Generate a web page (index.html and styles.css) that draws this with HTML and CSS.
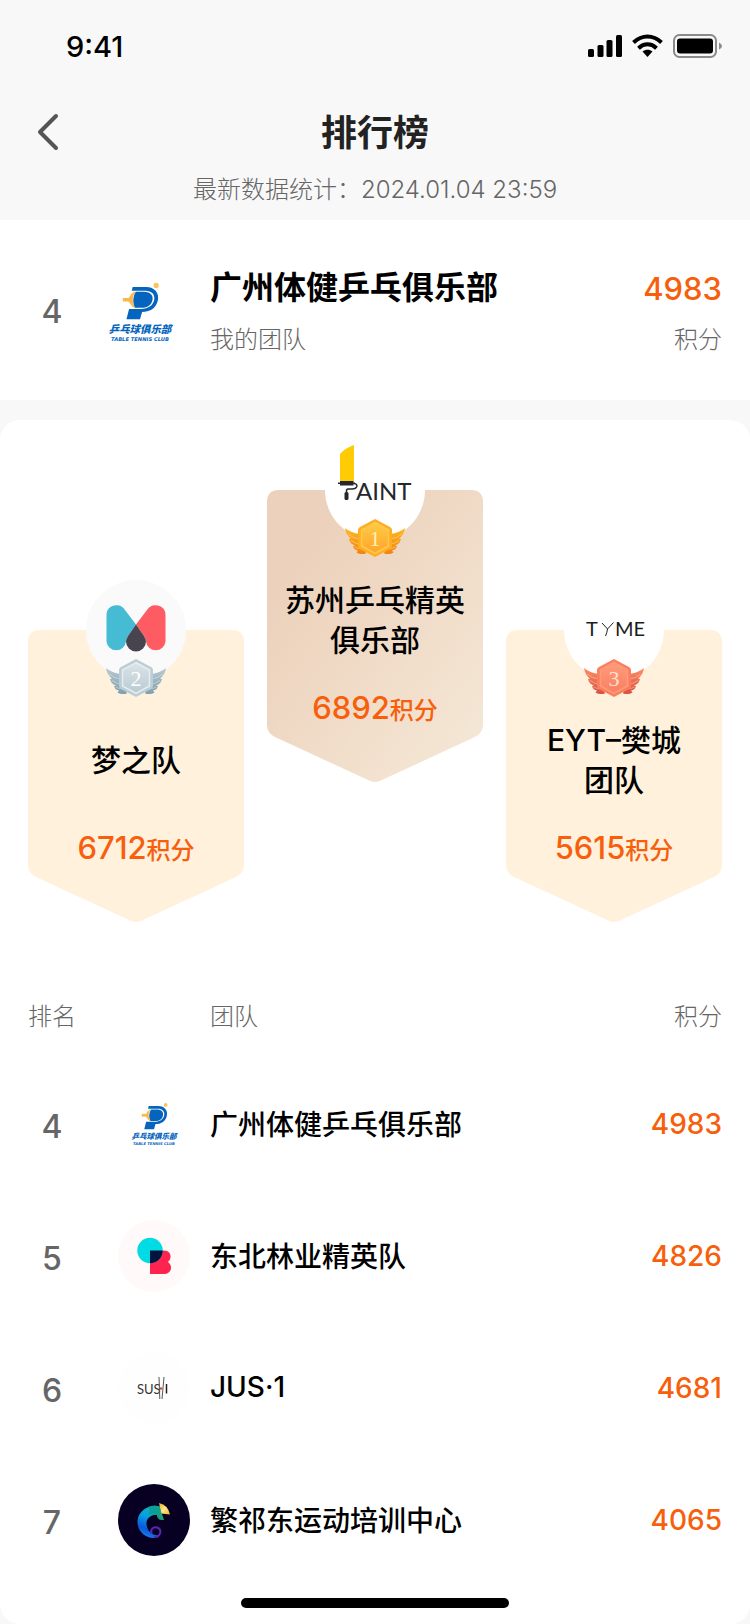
FILE: index.html
```html
<!DOCTYPE html>
<html lang="zh-CN">
<head>
<meta charset="utf-8">
<meta name="viewport" content="width=device-width, initial-scale=1">
<title>排行榜</title>
<link rel="stylesheet" href="styles.css">
</head>
<body>
<svg class="defs" aria-hidden="true">
  <defs>
    <linearGradient id="gold" x1="0" y1="0" x2="0" y2="1"><stop offset="0" stop-color="#ffcb45"/><stop offset="1" stop-color="#ffa42c"/></linearGradient>
    <linearGradient id="goldWing" x1="0" y1="0" x2="0" y2="1"><stop offset="0" stop-color="#ffb81f"/><stop offset="1" stop-color="#f08410"/></linearGradient>
    <linearGradient id="silver" x1="0" y1="0" x2="0" y2="1"><stop offset="0" stop-color="#dbe4e9"/><stop offset="1" stop-color="#b9cad2"/></linearGradient>
    <linearGradient id="silverWing" x1="0" y1="0" x2="0" y2="1"><stop offset="0" stop-color="#b9c9d1"/><stop offset="1" stop-color="#7f9fae"/></linearGradient>
    <linearGradient id="bronze" x1="0" y1="0" x2="0" y2="1"><stop offset="0" stop-color="#ff9c7a"/><stop offset="1" stop-color="#f87f62"/></linearGradient>
    <linearGradient id="bronzeWing" x1="0" y1="0" x2="0" y2="1"><stop offset="0" stop-color="#ff8d5f"/><stop offset="1" stop-color="#d95145"/></linearGradient>
    <linearGradient id="champion" x1="0" y1="0" x2="1" y2="1"><stop offset="0.2" stop-color="#ecd2bc"/><stop offset="0.36" stop-color="#eed6c1"/><stop offset="1" stop-color="#f5e9d8"/></linearGradient>
    <linearGradient id="tail" x1="0.7" y1="0" x2="0.4" y2="1"><stop offset="0" stop-color="#12b5b5"/><stop offset="0.4" stop-color="#079fe3"/><stop offset="0.75" stop-color="#0a57dc"/><stop offset="1" stop-color="#1683e8"/></linearGradient>
    <linearGradient id="beak" x1="0" y1="0" x2="1" y2="1"><stop offset="0" stop-color="#f5a51c"/><stop offset="0.5" stop-color="#fce88a"/><stop offset="1" stop-color="#f7b126"/></linearGradient>
    <symbol id="shield" viewBox="0 0 216 292" preserveAspectRatio="none">
      <path d="M12 0H204Q216 0 216 12V235Q216 243 208 247L115 290Q108 294 101 290L8 247Q0 243 0 235V12Q0 0 12 0Z"/>
    </symbol>
    <symbol id="wings" viewBox="0 0 60 38">
      <path d="M0 9Q6 14 15 15L21 34.500Q15 36 11.500 33.500L13 31.500Q9 31 8 27L10 26.500Q5 25 4 20L6 19.500Q1 16 0 9Z"/>
      <path d="M60 9Q54 14 45 15L39 34.500Q45 36 48.500 33.500L47 31.500Q51 31 52 27L50 26.500Q55 25 56 20L54 19.500Q59 16 60 9Z"/>
      <path d="M3 15Q8 19.500 15 20M6 21.500Q11 25 16 25.500M9.500 28Q13 30 18 30M57 15Q52 19.500 45 20M54 21.500Q49 25 44 25.500M50.500 28Q47 30 42 30" fill="none" stroke="#fff" stroke-opacity=".35"/>
    </symbol>
    <symbol id="club" viewBox="2 2 96 96">
      <circle cx="65.500" cy="24.500" r="2.500" fill="#fbc25e"/>
      <path d="M43 26H56C64 26 69 32 67 39.500C65 47 59 50 52 50L50 57H37L39.500 47H51C58 47 62 44 63.500 39C65 33 61 29.500 55 29.500H42Z" fill="#0565be"/>
      <path d="M46 30.500H54C60 30.500 63 34 62 38.500C61 43.500 57 46 52 46H45C43 41 43 35 46 30.500Z" fill="#0565be"/>
      <path d="M45 30.500C40 34 41 36.500 39 37H34V39.500H38.500C41 40 41.500 44 44.500 45.500C41.500 40 42 35 45 30.500Z" fill="#fbb84a" stroke="#fbb84a"/>
      <text x="50" y="70.500" class="club-cn">乒乓球俱乐部</text>
      <text x="50" y="78" class="club-en">TABLE TENNIS CLUB</text>
    </symbol>
  </defs>
</svg>

<div class="screen">
  <header class="top">
    <div class="status">
      <span class="clock">9:41</span>
      <svg class="status-icons" viewBox="0 0 136 28" aria-hidden="true">
        <rect x="0" y="17" width="6" height="8" rx="1.500"/><rect x="9.500" y="13" width="6" height="12" rx="1.500"/><rect x="18.500" y="8" width="6" height="17" rx="1.500"/><rect x="28" y="3" width="6" height="22" rx="1.500"/>
        <g fill="none" stroke="#000" stroke-width="4"><path d="M45.500 10.500C54 2.500 65 2.500 73.500 10.500"/><path d="M50.500 16.200C56 11 63 11 68.500 16.200"/></g>
        <path d="M54.500 19.500C57.500 17.200 61.500 17.200 64.500 19.500L59.500 25Z"/>
        <rect x="86" y="3" width="42" height="22" rx="5.500" fill="none" stroke="#8a8a8a" stroke-width="2"/>
        <rect x="89" y="6.500" width="36" height="15" rx="3"/>
        <path d="M131 10.500Q134 12 134 14T131 17.500Z" fill="#8a8a8a"/>
      </svg>
    </div>
    <div class="nav">
      <button class="back" type="button" aria-label="返回">
        <svg viewBox="0 0 24 40" aria-hidden="true"><path d="M20 4L4 20L20 36" fill="none" stroke="#555" stroke-width="4" stroke-linecap="round" stroke-linejoin="round"/></svg>
      </button>
      <h1 class="title">排行榜</h1>
    </div>
    <p class="updated">最新数据统计：2024.01.04 23:59</p>
  </header>

  <section class="mine">
    <span class="rank">4</span>
    <svg class="mine-logo" aria-hidden="true"><use href="#club"/></svg>
    <div class="mine-info">
      <h2 class="mine-name">广州体健乒乓俱乐部</h2>
      <p class="note">我的团队</p>
    </div>
    <div class="mine-score">
      <p class="mine-points">4983</p>
      <p class="note">积分</p>
    </div>
  </section>

  <main class="board">
    <section class="podium">
      <article class="place side">
        <svg class="plate" fill="#fff1dc" aria-hidden="true"><use href="#shield"/></svg>
        <svg class="avatar" viewBox="0 0 100 100" aria-hidden="true">
          <circle cx="50" cy="50" r="50" fill="#fafafa"/>
          <path d="M20.500 35A10 10 0 0 1 39 30L50 44.500L42 56Q39.500 60 40 61.500A9.800 9.800 0 0 1 20.500 61.500Z" fill="#45bbd4"/>
          <path d="M79.500 35A10 10 0 0 0 61 30L50 44.500L58 56Q60.500 60 60 61.500A9.800 9.800 0 0 0 79.500 61.500Z" fill="#ff5b62"/>
          <path d="M50 44.500L58 56Q60 59 60 61.500A10 10 0 0 1 40 61.500Q40 59 42 56Z" fill="#474450"/>
        </svg>
        <svg class="medal" viewBox="0 0 60 38" aria-hidden="true">
          <use href="#wings" fill="url(#silverWing)"/>
          <path d="M30 0L45 8Q47 9 47 11V27Q47 29 45 30L30 38L15 30Q13 29 13 27V11Q13 9 15 8Z" fill="#bccdd4"/>
          <path d="M30 3.500L43.500 11V27L30 34.500L16.500 27V11Z" fill="url(#silver)" stroke="#e6edf0" stroke-width="1.500"/>
          <text x="30" y="27" class="medal-no">2</text>
        </svg>
        <h3 class="place-name">梦之队</h3>
        <p class="place-score"><span class="num">6712</span>积分</p>
      </article>

      <article class="place">
        <svg class="plate" fill="url(#champion)" aria-hidden="true"><use href="#shield"/></svg>
        <svg class="avatar" viewBox="0 0 100 100" aria-hidden="true">
          <circle cx="50" cy="50" r="50" fill="#fff"/>
          <path d="M15 14Q20 8 29 5V41H15Z" fill="#fecb05"/>
          <path d="M15 41H28.500V42.500H30V44H28.500V45.500H15V44H13V42.500H15Z" fill="#24272b"/>
          <path d="M29 43.500Q32.500 44 31.800 46.500Q31 49 27 49H23Q21.500 49 21.500 51V53" fill="none" stroke="#24272b" stroke-width="1.500"/>
          <rect x="19.500" y="52" width="4" height="8" rx="1.500" fill="#24272b"/>
          <text x="31" y="59.500" class="paint">AINT</text>
        </svg>
        <svg class="medal" viewBox="0 0 60 38" aria-hidden="true">
          <use href="#wings" fill="url(#goldWing)"/>
          <path d="M30 0L45 8Q47 9 47 11V27Q47 29 45 30L30 38L15 30Q13 29 13 27V11Q13 9 15 8Z" fill="#ffad22"/>
          <path d="M30 3.500L43.500 11V27L30 34.500L16.500 27V11Z" fill="url(#gold)" stroke="#ffc94e" stroke-width="1.500"/>
          <text x="30" y="27" class="medal-no gold-no">1</text>
        </svg>
        <h3 class="place-name">苏州乒乓精英俱乐部</h3>
        <p class="place-score"><span class="num">6892</span>积分</p>
      </article>

      <article class="place side">
        <svg class="plate" fill="#fff1dc" aria-hidden="true"><use href="#shield"/></svg>
        <svg class="avatar" viewBox="0 0 100 100" aria-hidden="true">
          <circle cx="50" cy="50" r="50" fill="#fff"/>
          <text x="22" y="56" class="tyme">T</text>
          <path d="M38 43L43.500 49L49.500 42.500M43.500 49Q43 53 41.500 56" fill="none" stroke="#222" stroke-width="1"/>
          <text x="51" y="56" class="tyme">ME</text>
        </svg>
        <svg class="medal" viewBox="0 0 60 38" aria-hidden="true">
          <use href="#wings" fill="url(#bronzeWing)"/>
          <path d="M30 0L45 8Q47 9 47 11V27Q47 29 45 30L30 38L15 30Q13 29 13 27V11Q13 9 15 8Z" fill="#fb7f5e"/>
          <path d="M30 3.500L43.500 11V27L30 34.500L16.500 27V11Z" fill="url(#bronze)" stroke="#ff9b7b" stroke-width="1.500"/>
          <text x="30" y="27" class="medal-no bronze-no">3</text>
        </svg>
        <h3 class="place-name">EYT–樊城<br>团队</h3>
        <p class="place-score"><span class="num">5615</span>积分</p>
      </article>
    </section>

    <table class="ranking">
      <thead>
        <tr><th class="col-rank" scope="col">排名</th><th class="col-logo"></th><th class="col-team" scope="col">团队</th><th class="col-points" scope="col">积分</th></tr>
      </thead>
      <tbody>
        <tr>
          <td class="rank">4</td>
          <td class="col-logo"><svg class="logo" aria-hidden="true"><use href="#club"/></svg></td>
          <td class="team">广州体健乒乓俱乐部</td><td class="points">4983</td>
        </tr>
        <tr>
          <td class="rank">5</td>
          <td class="col-logo"><svg class="logo" viewBox="0 0 72 72" aria-hidden="true">
            <circle cx="36" cy="36" r="36" fill="#fff9f9"/>
            <path d="M32 30.500H46C53 30.500 54.500 38 50 42C55.500 46 53 54 46.500 54H32Z" fill="#ff2350"/>
            <circle cx="32" cy="30.500" r="12.700" fill="#00dbe4"/>
            <path d="M32 30.500H44.700A12.700 12.700 0 0 1 32 43.200Z" fill="#00143e"/>
          </svg></td>
          <td class="team">东北林业精英队</td><td class="points">4826</td>
        </tr>
        <tr>
          <td class="rank">6</td>
          <td class="col-logo"><svg class="logo" viewBox="0 0 72 72" aria-hidden="true">
            <circle cx="36" cy="36" r="36" fill="#fefefe"/>
            <text x="19" y="41.500" class="sushi">SUS</text>
            <path d="M41 25L41.800 47M46 25L44 47" stroke="#555" fill="none"/><path d="M48.500 32V41.500" stroke="#222" stroke-width="1.500"/>
            <circle cx="43" cy="36.500" r="1.200" fill="#e03a32"/>
          </svg></td>
          <td class="team">JUS·1</td><td class="points">4681</td>
        </tr>
        <tr>
          <td class="rank">7</td>
          <td class="col-logo"><svg class="logo" viewBox="0 0 72 72" aria-hidden="true">
            <circle cx="36" cy="36" r="36" fill="#080022"/>
            <path d="M43 23C31 19 20 27 19.500 37C19 47 27 54 36 54C39 54 41 53 42 51C36 52.500 29 48 28.500 40C28 34 33 30.500 41 30.500Z" fill="url(#tail)"/>
            <path d="M36 53C43 53 44.500 45.500 39 43.500C35 42.500 31.500 46 34 49.500" fill="none" stroke="#5b25b8" stroke-width="2"/>
            <path d="M30 23Q37 20 43 23L40 30.500H30Q33 27 30 23Z" fill="#0b9f9a"/>
            <path d="M42 24L46 36Q38 37 39 29Z" fill="#16a07d"/>
            <path d="M41 19Q50 21 52 30.500L43.500 29.500Q42 24 41 19Z" fill="url(#beak)"/>
          </svg></td>
          <td class="team">繁祁东运动培训中心</td><td class="points">4065</td>
        </tr>
      </tbody>
    </table>
    <div class="home-bar"></div>
  </main>
</div>
</body>
</html>
```

FILE: styles.css
```css
* { box-sizing: border-box; margin: 0; padding: 0; }

body {
  background: #f8f8f8;
  color: #000;
  font-family: Inter, "Noto Sans CJK SC", sans-serif;
}

.defs { position: absolute; width: 0; height: 0; }

.screen { min-height: 100vh; display: flex; flex-direction: column; }

/* Header */
.top { padding-bottom: 12px; }
.status {
  display: flex;
  align-items: center;
  justify-content: space-between;
  height: 92px;
  padding: 0 26px 0 66px;
}
.clock { padding-top: 2px; font-size: 29px; font-weight: 500; line-height: 40px; }
.status-icons { width: 136px; height: 28px; }

.nav {
  display: grid;
  grid-template-columns: 40px 1fr 40px;
  align-items: center;
  height: 80px;
  padding: 0 28px;
}
.back { width: 40px; height: 44px; padding: 0 0 0 8px; border: 0; background: none; text-align: left; cursor: pointer; }
.back svg { display: block; width: 24px; height: 40px; }
.title { grid-column: 2; padding-top: 2px; color: #222; font-size: 36px; font-weight: 700; line-height: 48px; text-align: center; }
.updated { color: #666; font-size: 24px; font-weight: 300; line-height: 36px; text-align: center; }

/* Own team */
.mine {
  display: flex;
  align-items: center;
  height: 180px;
  padding: 4px 28px 0;
  background: #fff;
}
.rank { width: 48px; color: #666; font-size: 32px; font-weight: 500; line-height: 48px; text-align: center; }
.mine-logo { width: 100px; height: 100px; margin: 0 20px 0 14px; }
.mine-info, .mine-score { display: flex; flex-direction: column; gap: 8px; }
.mine-info { flex: 1; }
.mine-name { font-size: 32px; font-weight: 600; line-height: 48px; }
.mine-points { padding-top: 2px; color: #f75f0c; font-size: 31px; font-weight: 500; line-height: 46px; }
.mine-score { text-align: right; }
.note { color: #666; font-size: 24px; font-weight: 300; line-height: 40px; }

.club-cn { fill: #0565be; font: italic 900 10px "Noto Sans CJK SC", sans-serif; text-anchor: middle; }
.club-en { fill: #0565be; font: italic 700 5px "DejaVu Sans", sans-serif; text-anchor: middle; }

/* Board */
.board {
  flex: 1;
  display: flex;
  flex-direction: column;
  margin-top: 20px;
  border-radius: 20px;
  background: #fff;
}
.podium { display: flex; align-items: flex-start; gap: 23px; padding: 70px 28px 52px; }
.place {
  position: relative;
  flex: 1;
  display: flex;
  flex-direction: column;
  align-items: center;
  gap: 28px;
  min-height: 292px;
  padding: 90px 16px 0;
}
.side { margin-top: 140px; }
.plate { position: absolute; inset: 0; width: 100%; height: 100%; }
.avatar { position: absolute; top: -50px; left: calc(50% - 50px); width: 100px; height: 100px; }
.medal { position: absolute; top: 29px; left: calc(50% - 30px); width: 60px; height: 38px; }
.medal-no { fill: #fff; font: 22px "Liberation Serif", serif; text-anchor: middle; }
.gold-no { fill: #fff0b4; }
.bronze-no { fill: #ffe0d2; }
.paint { fill: #24272b; font: 400 24px Lato, sans-serif; }
.tyme { fill: #1c1c1c; font: 400 20px Lato, sans-serif; }
.place-name {
  position: relative;
  display: flex;
  align-items: center;
  min-height: 80px;
  font-size: 30px;
  font-weight: 500;
  line-height: 40px;
  text-align: center;
}
.place-score { position: relative; color: #f75f0c; font-size: 24px; font-weight: 500; line-height: 40px; white-space: nowrap; }
.num { font-size: 31px; }

/* Ranking list */
.ranking { width: 100%; padding: 0 28px; border-spacing: 0; table-layout: fixed; }
.ranking th { height: 84px; padding-bottom: 4px; color: #666; font-size: 24px; font-weight: 300; text-align: left; }
.ranking td { height: 132px; vertical-align: middle; }
.ranking .rank { padding-top: 6px; }
.ranking .col-rank { width: 48px; }
.ranking .col-logo { width: 134px; padding-right: 20px; }
.ranking .col-points { width: 120px; text-align: right; }
.logo { display: block; width: 72px; height: 72px; margin-left: auto; }
.ranking .team { padding-bottom: 2px; font-size: 28px; font-weight: 500; }
.points { color: #f75f0c; font-size: 28px; font-weight: 500; text-align: right; }
.sushi { fill: #333; font: 13px Lato, sans-serif; }

.home-bar { width: 268px; height: 10px; margin: auto auto 16px; border-radius: 5px; background: #000; }
```
